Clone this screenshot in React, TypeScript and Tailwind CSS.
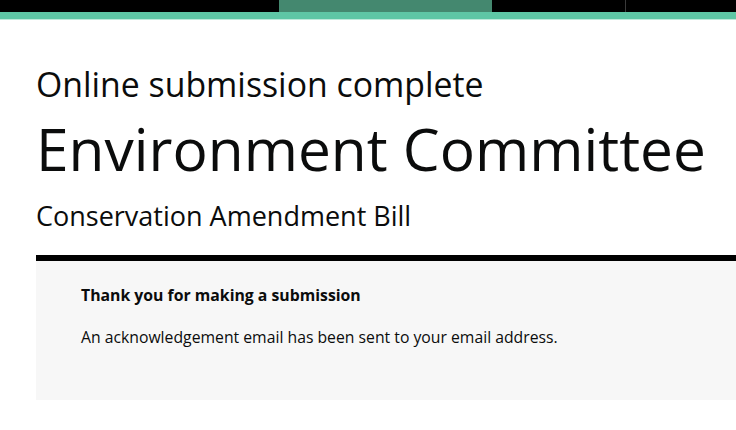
export default function App() {
  return (
    <div className="min-h-[430px] w-full bg-white font-['Open_Sans',sans-serif] text-[#0b0c0c]">
      {/* top navigation strip */}
      <div className="flex h-[12px] w-full bg-black">
        <div className="w-[279px]" />
        <div className="w-[213px] bg-[#44886f]" />
        <div className="w-[133px]" />
        <div className="w-px bg-[#3a3a3a]" />
        <div className="flex-1" />
      </div>
      <div className="h-[7px] w-full bg-[#5ec6a5]" />
      <div className="h-px w-full bg-[#bfe9db]" />

      <main className="pl-[36px] pt-[44px]">
        <p className="text-[33.8px] leading-[40px]">Online submission complete</p>
        <h1 className="mt-[9px] text-[58.6px] leading-[70px]">Environment Committee</h1>
        <p className="mt-[16px] text-[27px] leading-[34px]">Conservation Amendment Bill</p>

        <section className="mt-[22px] border-t-[6px] border-black bg-[#f7f7f7] pb-[52px] pl-[45px] pt-[23px]">
          <p className="text-[15.8px] font-bold leading-[22px]">Thank you for making a submission</p>
          <p className="mt-[20px] text-[15.75px] leading-[22px]">
            An acknowledgement email has been sent to your email address.
          </p>
        </section>
      </main>
    </div>
  );
}
